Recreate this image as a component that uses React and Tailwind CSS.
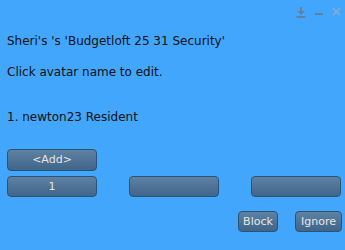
import React from 'react';

const Btn = ({ children, className = '' }) => (
  <button
    className={`h-[21px] rounded-[4px] border border-[#2a5378] bg-gradient-to-b from-[#5f82a3] to-[#3f6589] text-[11px] text-[#e6e6e6] leading-none ${className}`}
  >
    {children}
  </button>
);

export default function App() {
  return (
    <div
      className="w-[345px] h-[250px] bg-[#42a6fc] text-[#111] relative"
      style={{ fontFamily: '"DejaVu Sans", sans-serif' }}
    >
      <div className="absolute top-[7px] right-[4px] flex items-start gap-[9px]">
        <svg width="10" height="11" viewBox="0 0 10 11">
          <rect x="4" y="0" width="2" height="4" fill="#5d82a6" />
          <path d="M1 4 H9 L5 8 Z" fill="#5d82a6" />
          <rect x="0.5" y="9" width="9" height="2" fill="#5d82a6" />
        </svg>
        <svg width="8" height="11" viewBox="0 0 8 11">
          <rect x="0" y="6" width="8" height="2" fill="#5d82a6" />
        </svg>
        <svg width="9" height="11" viewBox="0 0 9 11">
          <path d="M1 1 L8 8 M8 1 L1 8" stroke="#88abcd" strokeWidth="1.6" />
        </svg>
      </div>
      <div className="pt-[34px] px-[7px] text-[12px] leading-[15px]">
        <div>Sheri's 's 'Budgetloft 25 31 Security'</div>
        <div className="mt-[16px]">Click avatar name to edit.</div>
        <div className="mt-[30px]">1. newton23 Resident</div>
      </div>
      <div className="pl-[7px] mt-[21px]">
        <Btn className="w-[90px] h-[22px]">&lt;Add&gt;</Btn>
        <div className="flex gap-[32px] mt-[5px]">
          <Btn className="w-[90px]">1</Btn>
          <Btn className="w-[90px]"></Btn>
          <Btn className="w-[90px]"></Btn>
        </div>
      </div>
      <div className="flex justify-end gap-[17px] mt-[14px] pr-[3px]">
        <Btn className="w-[40px]">Block</Btn>
        <Btn className="w-[47px]">Ignore</Btn>
      </div>
    </div>
  );
}
